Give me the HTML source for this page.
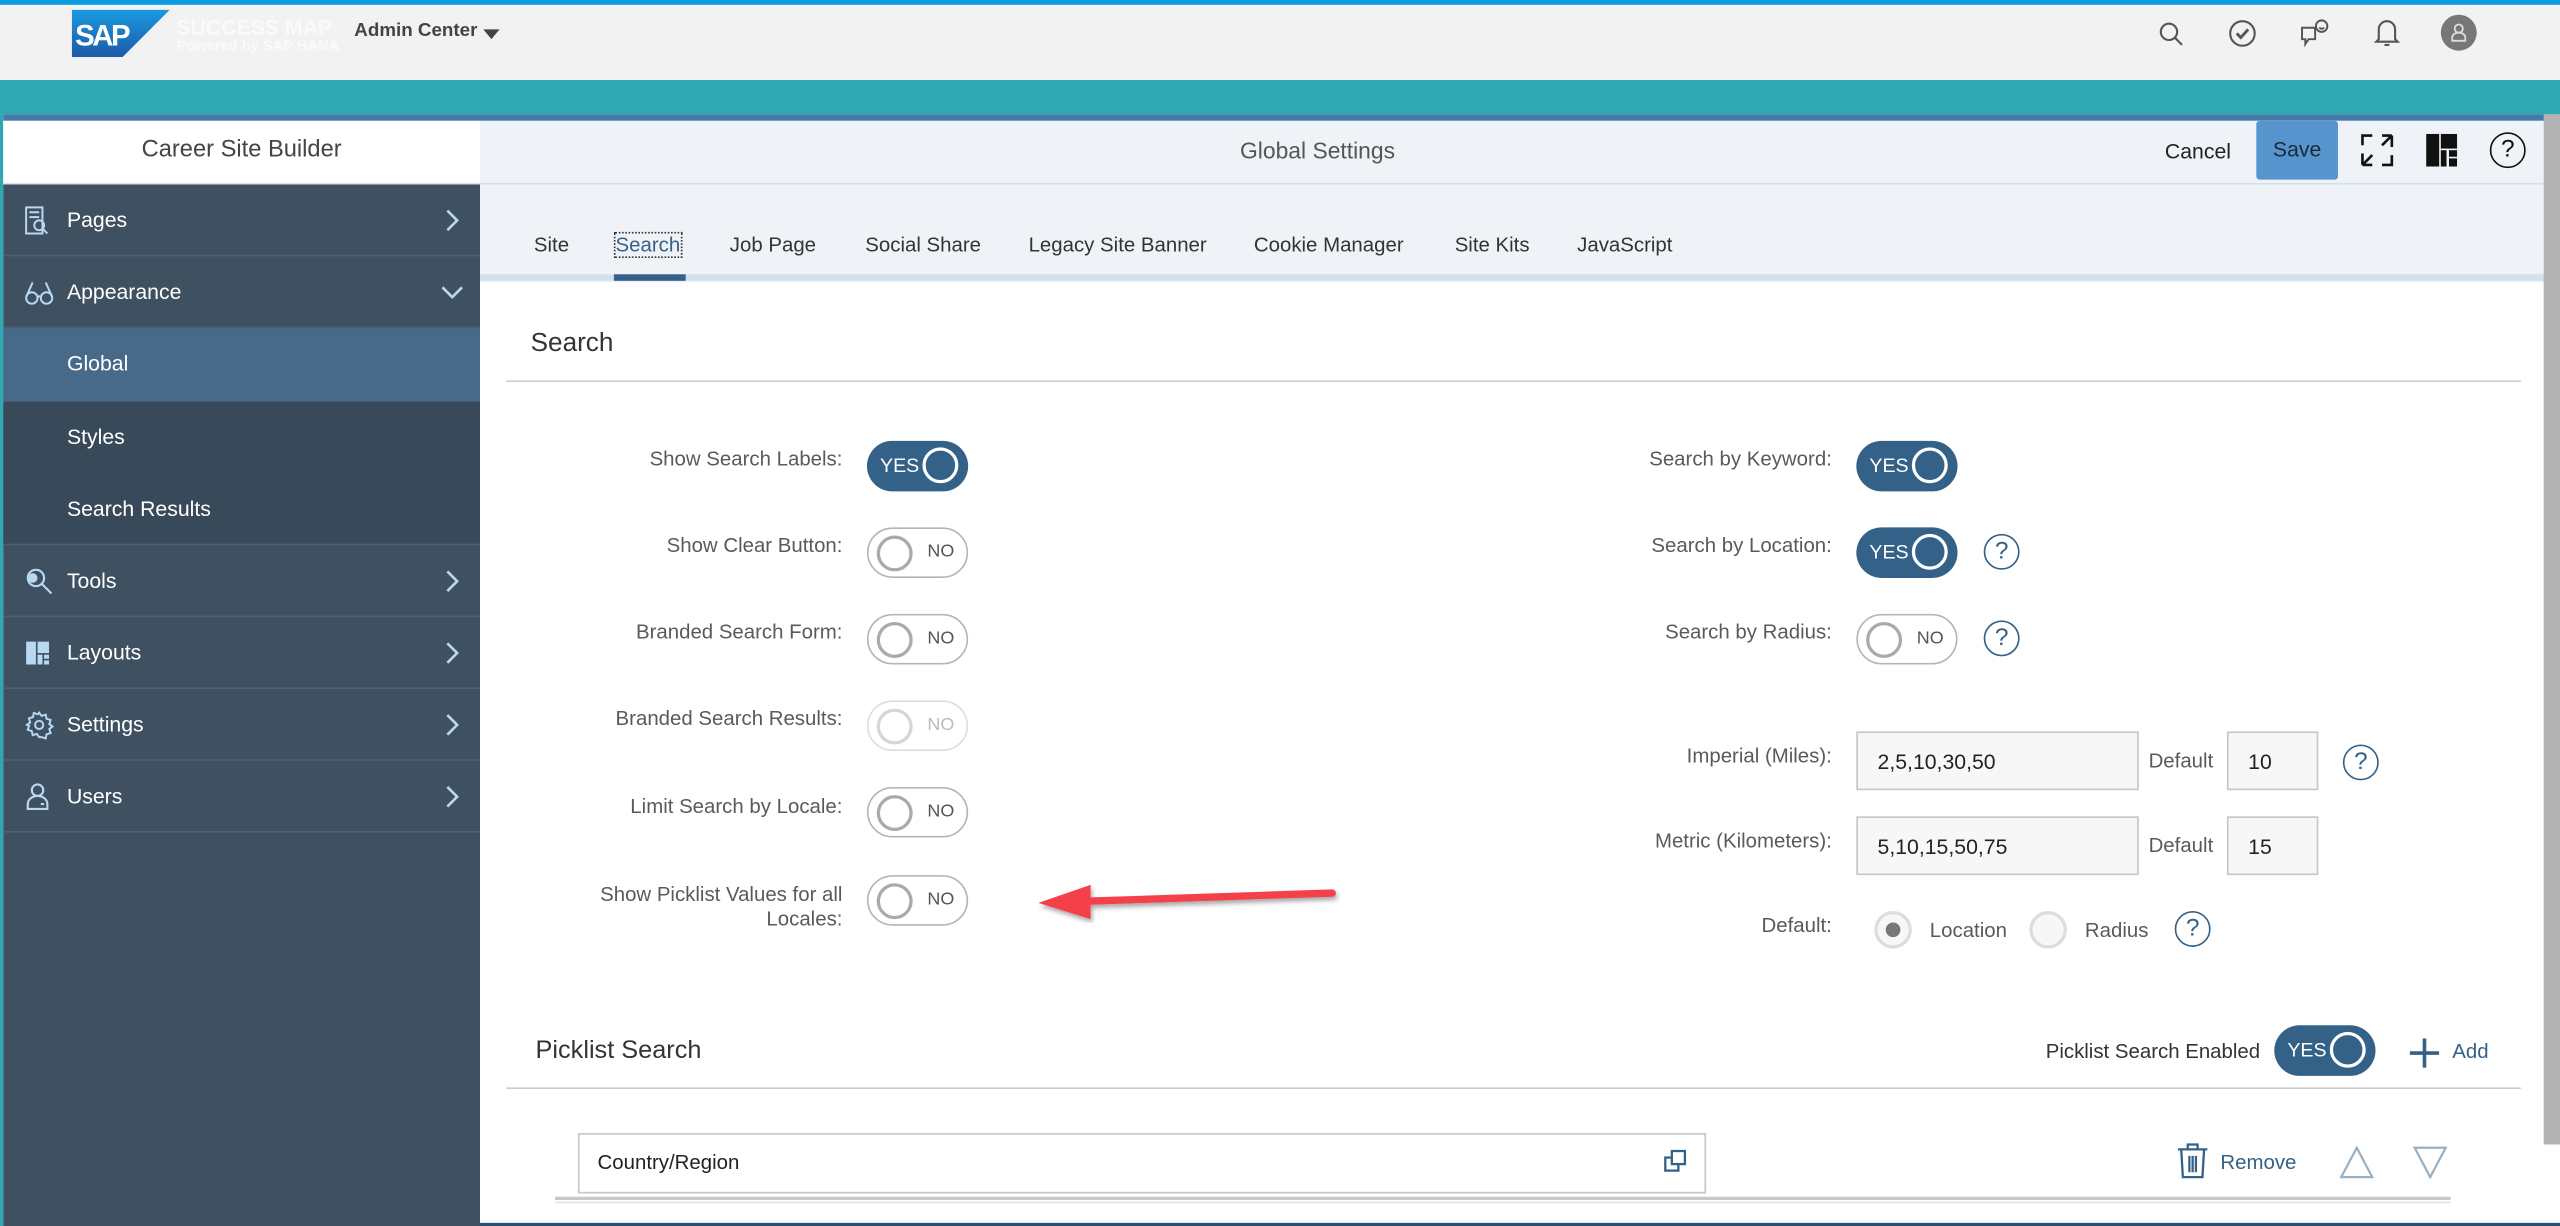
<!DOCTYPE html>
<html><head><meta charset="utf-8">
<style>
*{box-sizing:border-box;margin:0;padding:0}
html,body{width:2560px;height:1226px;overflow:hidden;background:#fff;font-family:"Liberation Sans",sans-serif}
#f{position:absolute;left:0;top:0;width:1568px;height:751px;transform:scale(1.632653);transform-origin:0 0;overflow:hidden;background:#fff}
.a{position:absolute}
.t{white-space:nowrap}
.nav{position:absolute;left:2px;width:292px;height:44px;border-bottom:1px solid #4d6073;color:#fff;font-size:13px}
.nav span{position:absolute;left:39px;top:14px}
.nav svg.ic{position:absolute;left:13px;top:13px}
.nav .ch{position:absolute;right:12px;top:15px}
.lbl{position:absolute;font-size:12.5px;color:#5a5a5a;text-align:right;white-space:nowrap}
.tg{position:absolute;width:62px;height:31px;border-radius:16px}
.tg.y{background:#346187;color:#fff}
.tg.n{background:#fff;border:1px solid #b5b5b5;color:#555}
.tg.y .k{position:absolute;right:6px;top:4px;width:22px;height:22px;border:2px solid #fff;border-radius:50%}
.tg.y .x{position:absolute;left:8px;top:8px;font-size:12px}
.tg.n .k{position:absolute;left:5px;top:4px;width:22px;height:22px;border:2px solid #aaa;border-radius:50%}
.tg.n .x{position:absolute;left:36px;top:8px;font-size:11px}
.hp{position:absolute;width:22px;height:22px;border:1.5px solid #346187;border-radius:50%;color:#346187;font-size:15px;text-align:center;line-height:19px}
.inp{position:absolute;height:36px;background:#f7f7f7;border:1px solid #c6c6c6;font-size:13px;color:#222;padding:10px 0 0 12px}
.tab{position:absolute;top:143px;font-size:12.5px;color:#333}
</style></head><body><div id="f">
<div class="a" style="left:0;top:0;width:1568px;height:3px;background:#0a9be0"></div>
<div class="a" style="left:0;top:3px;width:1568px;height:46px;background:#f2f2f2"></div>
<svg class="a" style="left:44px;top:6px" width="60" height="29" viewBox="0 0 60 29"><defs><linearGradient id="g" x1="0" y1="0" x2="0" y2="1"><stop offset="0" stop-color="#1a9ae0"/><stop offset="1" stop-color="#1c5aa8"/></linearGradient></defs><polygon points="0,0 60,0 31,29 0,29" fill="url(#g)"/><text x="2" y="22" font-family="Liberation Sans" font-weight="bold" font-size="18" fill="#fff" letter-spacing="-1.5">SAP</text></svg>
<div class="a t" style="left:108px;top:9px;font-size:13px;font-weight:bold;color:#fafafa">SUCCESS MAP</div>
<div class="a t" style="left:108px;top:23px;font-size:9px;font-weight:bold;color:#fafafa">Powered by SAP HANA</div>
<div class="a t" style="left:217px;top:13px;font-size:11.5px;font-weight:bold;color:#444">Admin Center</div>
<div class="a" style="left:296px;top:18px;width:0;height:0;border-left:5px solid transparent;border-right:5px solid transparent;border-top:6px solid #444"></div>
<svg class="a" style="left:1322px;top:13px" width="16" height="16" viewBox="0 0 16 16" fill="none" stroke="#555" stroke-width="1.3"><circle cx="6.5" cy="6.5" r="5"/><path d="M10 10l4.5 4.5"/></svg>
<svg class="a" style="left:1365px;top:12px" width="17" height="17" viewBox="0 0 17 17" fill="none" stroke="#555" stroke-width="1.3"><circle cx="8.5" cy="8.5" r="7.5"/><path d="M5 8.5l2.5 2.5 4.5-5" stroke-width="1.8"/></svg>
<svg class="a" style="left:1409px;top:11px" width="18" height="18" viewBox="0 0 18 18" fill="none" stroke="#555" stroke-width="1.2"><path d="M1 6h8v7H5l-2 3v-3H1z"/><circle cx="13" cy="5" r="3.5"/><path d="M11.5 6q1.5 1.2 3 0"/></svg>
<svg class="a" style="left:1454px;top:11px" width="16" height="18" viewBox="0 0 16 18" fill="none" stroke="#555" stroke-width="1.3"><path d="M3 13V7a5 5 0 0110 0v6l1.5 1.5h-13z"/><path d="M6.5 16.5h3"/></svg>
<div class="a" style="left:1495px;top:9px;width:22px;height:22px;border-radius:50%;background:#777"></div>
<svg class="a" style="left:1501px;top:14px" width="10" height="12" viewBox="0 0 10 12" fill="none" stroke="#ddd" stroke-width="1.1"><circle cx="5" cy="3.5" r="2.5"/><path d="M1 11V9a4 3 0 018 0v2z"/></svg>
<div class="a" style="left:0;top:49px;width:1568px;height:21px;background:#2ea9b2"></div>
<div class="a" style="left:2px;top:70px;width:1566px;height:4px;background:#4479a8"></div>
<div class="a" style="left:0;top:70px;width:2px;height:681px;background:#2ea9b2"></div>
<div class="a" style="left:2px;top:74px;width:292px;height:39px;background:#fff;border-bottom:1px solid #dfe3e8"></div>
<div class="a t" style="left:2px;top:84px;width:292px;text-align:center;font-size:14.5px;color:#444">Career Site Builder</div>
<div class="a" style="left:2px;top:113px;width:292px;height:638px;background:#3f5061"></div>
<div class="nav" style="top:113px"><svg class="ic" width="16" height="18" viewBox="0 0 16 18" fill="none" stroke="#b9d8f2" stroke-width="1.2"><path d="M1 1h10v16H1z"/><path d="M3 4h6M3 7h6"/><circle cx="9" cy="12" r="3"/><path d="M11 14l3 3"/></svg><span>Pages</span><svg class="ch" width="9" height="14" viewBox="0 0 9 14" fill="none" stroke="#b9d8f2" stroke-width="1.6"><path d="M1 1l6 6-6 6"/></svg></div>
<div class="nav" style="top:157px"><svg class="ic" width="18" height="18" viewBox="0 0 18 18" fill="none" stroke="#b9d8f2" stroke-width="1.2"><circle cx="4.5" cy="12.5" r="3.5"/><circle cx="13.5" cy="12.5" r="3.5"/><path d="M1 12L5 3M17 12L13 3M8 12q1-1 2 0"/></svg><span>Appearance</span><svg class="ch" width="14" height="9" viewBox="0 0 14 9" fill="none" stroke="#b9d8f2" stroke-width="1.6" style="top:18px;right:10px"><path d="M1 1l6 6 6-6"/></svg></div>
<div class="nav" style="top:201px;background:#486a89;border:none;height:45px"><span>Global</span></div>
<div class="nav" style="top:246px;background:#384a5a;border:none"><span>Styles</span></div>
<div class="nav" style="top:290px;background:#384a5a"><span>Search Results</span></div>
<div class="nav" style="top:334px"><svg class="ic" width="18" height="18" viewBox="0 0 18 18" fill="none" stroke="#b9d8f2" stroke-width="1.3"><circle cx="7" cy="7" r="5"/><circle cx="5" cy="7" r="2.3" fill="#b9d8f2"/><path d="M10.5 10.5l6 6"/></svg><span>Tools</span><svg class="ch" width="9" height="14" viewBox="0 0 9 14" fill="none" stroke="#b9d8f2" stroke-width="1.6"><path d="M1 1l6 6-6 6"/></svg></div>
<div class="nav" style="top:378px"><svg class="ic" width="18" height="18" viewBox="0 0 18 18" fill="#b9d8f2"><rect x="1" y="2" width="6" height="14"/><rect x="8" y="2" width="7" height="7"/><rect x="8" y="10" width="3" height="6"/><rect x="12" y="10" width="3" height="2.5"/><rect x="12" y="13.5" width="3" height="2.5"/></svg><span>Layouts</span><svg class="ch" width="9" height="14" viewBox="0 0 9 14" fill="none" stroke="#b9d8f2" stroke-width="1.6"><path d="M1 1l6 6-6 6"/></svg></div>
<div class="nav" style="top:422px"><svg class="ic" width="18" height="18" viewBox="0 0 18 18" fill="none" stroke="#b9d8f2" stroke-width="1.2"><circle cx="9" cy="9" r="2.5"/><path d="M9 1.5l1.5 2 2.5-.8.5 2.5 2.5.8-.8 2.5 2 1.5-2 1.5.8 2.5-2.5.8-.5 2.5-2.5-.8L9 16.5l-1.5-2-2.5.8-.5-2.5-2.5-.8.8-2.5L1.5 9l2-1.5-.8-2.5 2.5-.8.5-2.5 2.5.8z"/></svg><span>Settings</span><svg class="ch" width="9" height="14" viewBox="0 0 9 14" fill="none" stroke="#b9d8f2" stroke-width="1.6"><path d="M1 1l6 6-6 6"/></svg></div>
<div class="nav" style="top:466px"><svg class="ic" width="16" height="18" viewBox="0 0 16 18" fill="none" stroke="#b9d8f2" stroke-width="1.3"><circle cx="8" cy="5" r="3.5"/><path d="M2 16.5v-3a6 5 0 0112 0v3z"/><path d="M10 13.5h2"/></svg><span>Users</span><svg class="ch" width="9" height="14" viewBox="0 0 9 14" fill="none" stroke="#b9d8f2" stroke-width="1.6"><path d="M1 1l6 6-6 6"/></svg></div>
<div class="a" style="left:294px;top:74px;width:1264px;height:99px;background:#eff3f7"></div>
<div class="a" style="left:294px;top:112px;width:1264px;height:1px;background:#d6e0ea"></div>
<div class="a t" style="left:700px;top:84px;width:214px;text-align:center;font-size:14px;color:#555">Global Settings</div>
<div class="a t" style="left:1326px;top:85px;font-size:13px;color:#222">Cancel</div>
<div class="a" style="left:1382px;top:74px;width:50px;height:36px;background:#5594cc;border-radius:2px;font-size:13px;color:#1a2a3a;text-align:center;line-height:36px">Save</div>
<svg class="a" style="left:1444px;top:80px" width="24" height="24" viewBox="0 0 24 24" fill="none" stroke="#111" stroke-width="1.6"><path d="M3 9V3h6M21 15v6h-6M3 14v7M3 21l6-6M21 10V3M21 3l-6 6M15 3h6M3 21h6"/></svg>
<svg class="a" style="left:1486px;top:82px" width="19" height="20" viewBox="0 0 19 20" fill="#111"><rect x="0" y="0" width="8" height="20"/><rect x="9" y="0" width="10" height="9"/><rect x="9" y="10" width="3.5" height="10"/><rect x="14" y="10" width="5" height="4"/><rect x="14" y="15" width="5" height="5"/></svg>
<div class="a" style="left:1525px;top:81px;width:22px;height:22px;border:1.5px solid #111;border-radius:50%;text-align:center;font-size:15px;line-height:19px;color:#111">?</div>
<div class="tab" style="left:327px">Site</div>
<div class="tab" style="left:377px;color:#346187;outline:1px dotted #333">Search</div>
<div class="tab" style="left:447px">Job Page</div>
<div class="tab" style="left:530px">Social Share</div>
<div class="tab" style="left:630px">Legacy Site Banner</div>
<div class="tab" style="left:768px">Cookie Manager</div>
<div class="tab" style="left:891px">Site Kits</div>
<div class="tab" style="left:966px">JavaScript</div>
<div class="a" style="left:294px;top:168px;width:1264px;height:4px;background:#d3e0ee"></div>
<div class="a" style="left:376px;top:168px;width:44px;height:4px;background:#35608a"></div>
<div class="a" style="left:1558px;top:70px;width:10px;height:631px;background:#b3b3b3"></div>
<div class="a t" style="left:325px;top:202px;font-size:16px;color:#333">Search</div>
<div class="a" style="left:310px;top:233px;width:1234px;height:1px;background:#ccc"></div>
<div class="lbl" style="right:1052px;top:274px">Show Search Labels:</div>
<div class="tg y" style="left:531px;top:270px"><span class="x">YES</span><span class="k"></span></div>
<div class="lbl" style="right:1052px;top:327px">Show Clear Button:</div>
<div class="tg n" style="left:531px;top:323px"><span class="k"></span><span class="x">NO</span></div>
<div class="lbl" style="right:1052px;top:380px">Branded Search Form:</div>
<div class="tg n" style="left:531px;top:376px"><span class="k"></span><span class="x">NO</span></div>
<div class="lbl" style="right:1052px;top:433px">Branded Search Results:</div>
<div class="tg n" style="left:531px;top:429px;border-color:#ddd;color:#bbb"><span class="k" style="border-color:#d6d6d6"></span><span class="x">NO</span></div>
<div class="lbl" style="right:1052px;top:487px">Limit Search by Locale:</div>
<div class="tg n" style="left:531px;top:482px"><span class="k"></span><span class="x">NO</span></div>
<div class="lbl" style="right:1052px;top:541px;line-height:15px">Show Picklist Values for all<br>Locales:</div>
<div class="tg n" style="left:531px;top:536px"><span class="k"></span><span class="x">NO</span></div>
<svg class="a" style="left:630px;top:536px" width="200" height="32" viewBox="0 0 200 32"><defs><filter id="sh"><feDropShadow dx="1" dy="2" stdDeviation="1.5" flood-opacity="0.35"/></filter></defs><g filter="url(#sh)"><path d="M36 16L186 11" stroke="#f44149" stroke-width="4.5" stroke-linecap="round"/><polygon points="6,17 38,6 38,27" fill="#f44149"/></g></svg>
<div class="lbl" style="right:446px;top:274px">Search by Keyword:</div>
<div class="tg y" style="left:1137px;top:270px"><span class="x">YES</span><span class="k"></span></div>
<div class="lbl" style="right:446px;top:327px">Search by Location:</div>
<div class="tg y" style="left:1137px;top:323px"><span class="x">YES</span><span class="k"></span></div>
<div class="hp" style="left:1215px;top:327px">?</div>
<div class="lbl" style="right:446px;top:380px">Search by Radius:</div>
<div class="tg n" style="left:1137px;top:376px"><span class="k"></span><span class="x">NO</span></div>
<div class="hp" style="left:1215px;top:380px">?</div>
<div class="lbl" style="right:446px;top:456px">Imperial (Miles):</div>
<div class="inp" style="left:1137px;top:448px;width:173px">2,5,10,30,50</div>
<div class="lbl" style="left:1316px;top:459px">Default</div>
<div class="inp" style="left:1364px;top:448px;width:56px">10</div>
<div class="hp" style="left:1435px;top:456px">?</div>
<div class="lbl" style="right:446px;top:508px">Metric (Kilometers):</div>
<div class="inp" style="left:1137px;top:500px;width:173px">5,10,15,50,75</div>
<div class="lbl" style="left:1316px;top:511px">Default</div>
<div class="inp" style="left:1364px;top:500px;width:56px">15</div>
<div class="lbl" style="right:446px;top:560px">Default:</div>
<div class="a" style="left:1148px;top:558px;width:23px;height:23px;border-radius:50%;border:2px solid #ddd;background:#f7f7f7"></div>
<div class="a" style="left:1155px;top:565px;width:9px;height:9px;border-radius:50%;background:#777"></div>
<div class="lbl" style="left:1182px;top:563px">Location</div>
<div class="a" style="left:1243px;top:558px;width:23px;height:23px;border-radius:50%;border:2px solid #ddd;background:#f7f7f7"></div>
<div class="lbl" style="left:1277px;top:563px">Radius</div>
<div class="hp" style="left:1332px;top:558px">?</div>
<div class="a t" style="left:328px;top:635px;font-size:15.5px;color:#333">Picklist Search</div>
<div class="lbl" style="left:1253px;top:637px;color:#333">Picklist Search Enabled</div>
<div class="tg y" style="left:1393px;top:628px"><span class="x">YES</span><span class="k"></span></div>
<svg class="a" style="left:1476px;top:636px" width="18" height="18" viewBox="0 0 18 18" stroke="#346187" stroke-width="2.2"><path d="M9 0v18M0 9h18"/></svg>
<div class="lbl" style="left:1502px;top:637px;color:#346187">Add</div>
<div class="a" style="left:310px;top:666px;width:1234px;height:1px;background:#ccc"></div>
<div class="a" style="left:354px;top:694px;width:691px;height:37px;border:1px solid #c6c6c6;background:#fff"></div>
<div class="lbl" style="left:366px;top:705px;color:#222">Country/Region</div>
<svg class="a" style="left:1019px;top:704px" width="14" height="14" viewBox="0 0 14 14" fill="none" stroke="#346187" stroke-width="1.4"><rect x="1" y="5" width="8" height="8"/><rect x="5" y="1" width="8" height="8" fill="#fff"/></svg>
<svg class="a" style="left:1333px;top:700px" width="20" height="22" viewBox="0 0 20 22" fill="none" stroke="#346187" stroke-width="1.4"><path d="M1 4h18M7 4V1h6v3M3 4l1 17h12l1-17M8 8v10M10 8v10M12 8v10"/></svg>
<div class="lbl" style="left:1360px;top:705px;color:#346187">Remove</div>
<svg class="a" style="left:1433px;top:702px" width="21" height="20" viewBox="0 0 21 20" fill="none" stroke="#9ab0c4" stroke-width="1.4"><path d="M10.5 1L20 19H1z"/></svg>
<svg class="a" style="left:1478px;top:702px" width="21" height="20" viewBox="0 0 21 20" fill="none" stroke="#9ab0c4" stroke-width="1.4"><path d="M10.5 19L20 1H1z"/></svg>
<div class="a" style="left:340px;top:733px;width:1161px;height:2px;background:#c8c8c8"></div>
<div class="a" style="left:340px;top:736px;width:1161px;height:1px;background:#e2e2e2"></div>
<div class="a" style="left:294px;top:749px;width:1274px;height:2px;background:#2a4f70"></div>
</div></body></html>
